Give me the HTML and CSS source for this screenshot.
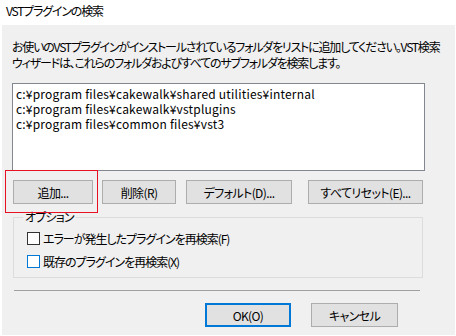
FILE: index.html
```html
<!DOCTYPE html>
<html lang="ja">
<head>
<meta charset="utf-8">
<link rel="stylesheet" href="styles.css">
</head>
<body>
<div class="titlebar">VSTプラグインの検索</div>
<div class="dialog">
  <p class="desc">お使いのVSTプラグインがインストールされているフォルダをリストに追加してください。VST検索<br>ウィザードは、これらのフォルダおよびすべてのサブフォルダを検索します。</p>
  <div class="listbox">
    <div class="item">c:¥program files¥cakewalk¥shared utilities¥internal</div>
    <div class="item">c:¥program files¥cakewalk¥vstplugins</div>
    <div class="item">c:¥program files¥common files¥vst3</div>
  </div>
  <div class="btnrow">
    <button class="btn b-add">追加...</button>
    <button class="btn b-del">削除(R)</button>
    <button class="btn b-def">デフォルト(D)...</button>
    <button class="btn b-reset">すべてリセット(E)...</button>
  </div>
  <div class="highlight"></div>
  <fieldset class="group">
    <legend>オプション</legend>
    <label class="check"><span class="box"></span>エラーが発生したプラグインを再検索(F)</label>
    <label class="check"><span class="box hover"></span>既存のプラグインを再検索(X)</label>
  </fieldset>
  <div class="sep"></div>
  <div class="footer">
    <button class="btn b-ok">OK(O)</button>
    <button class="btn b-cancel">キャンセル</button>
  </div>
</div>
</body>
</html>
```
FILE: styles.css
```css
html, body {
  margin: 0;
  padding: 0;
  background: #ffffff;
}
body {
  width: 456px;
  height: 336px;
  overflow: hidden;
  font-family: "Noto Sans CJK JP", sans-serif;
  font-size: 12px;
  font-feature-settings: "palt";
  color: #000;
}
.titlebar {
  height: 25px;
  line-height: 22px;
  padding-left: 6px;
  box-sizing: border-box;
  white-space: nowrap;
  letter-spacing: -1.2px;
}
.dialog {
  position: relative;
  margin: 0 1px 0 2px;
  height: 310px;
  background: #f0f0f0;
  display: flex;
  flex-direction: column;
}
.desc {
  margin: 14px 0 0 10px;
  line-height: 16px;
  letter-spacing: -1.2px;
  white-space: nowrap;
}
.listbox {
  margin: 12px 0 0 10px;
  width: 413px;
  height: 88px;
  border: 1px solid #828790;
  background: #fff;
  padding: 2px 0 0 3px;
  box-sizing: border-box;
}
.item {
  height: 15px;
  line-height: 15px;
  white-space: nowrap;
  letter-spacing: 0.2px;
}
.btnrow {
  display: flex;
  margin: 9px 0 0 11px;
  height: 24px;
}
.btn {
  font: inherit;
  font-feature-settings: "palt";
  letter-spacing: -0.6px;
  background: #e1e1e1;
  border: 1px solid #adadad;
  height: 24px;
  padding: 0;
  margin: 0;
  color: #000;
  box-sizing: border-box;
  white-space: nowrap;
}
.b-add { width: 80px; }
.b-del { width: 74px; margin-left: 9px; }
.b-def { width: 106px; margin-left: 10px; }
.b-reset { width: 115px; margin-left: 16px; }
.highlight {
  position: absolute;
  left: 3px;
  top: 145px;
  width: 93px;
  height: 43px;
  border: 1px solid #e81123;
  box-sizing: border-box;
}
.group {
  margin: 7px 0 0 11px;
  width: 410px;
  height: 67px;
  box-sizing: border-box;
  border: 1px solid #dcdcdc;
  padding: 9px 0 0 13px;
  display: flex;
  flex-direction: column;
  gap: 10px;
}
.group legend {
  padding: 0 2px;
  margin-left: -4px;
  line-height: 12px;
  letter-spacing: -0.8px;
}
.check {
  display: flex;
  align-items: center;
  height: 13px;
  line-height: 13px;
  white-space: nowrap;
  letter-spacing: -1px;
}
.box {
  width: 13px;
  height: 13px;
  box-sizing: border-box;
  border: 1px solid #333;
  background: #fff;
  margin-right: 3px;
  flex: none;
}
.box.hover {
  border-color: #0078d7;
}
.sep {
  margin: 12px 0 0 12px;
  width: 406px;
  height: 1px;
  background: #a0a0a0;
}
.footer {
  display: flex;
  margin: 12px 0 0 203px;
}
.b-ok {
  width: 86px;
  height: 24px;
  border: 2px solid #0078d7;
}
.b-cancel {
  width: 87px;
  height: 24px;
  margin-left: 20px;
}
```
